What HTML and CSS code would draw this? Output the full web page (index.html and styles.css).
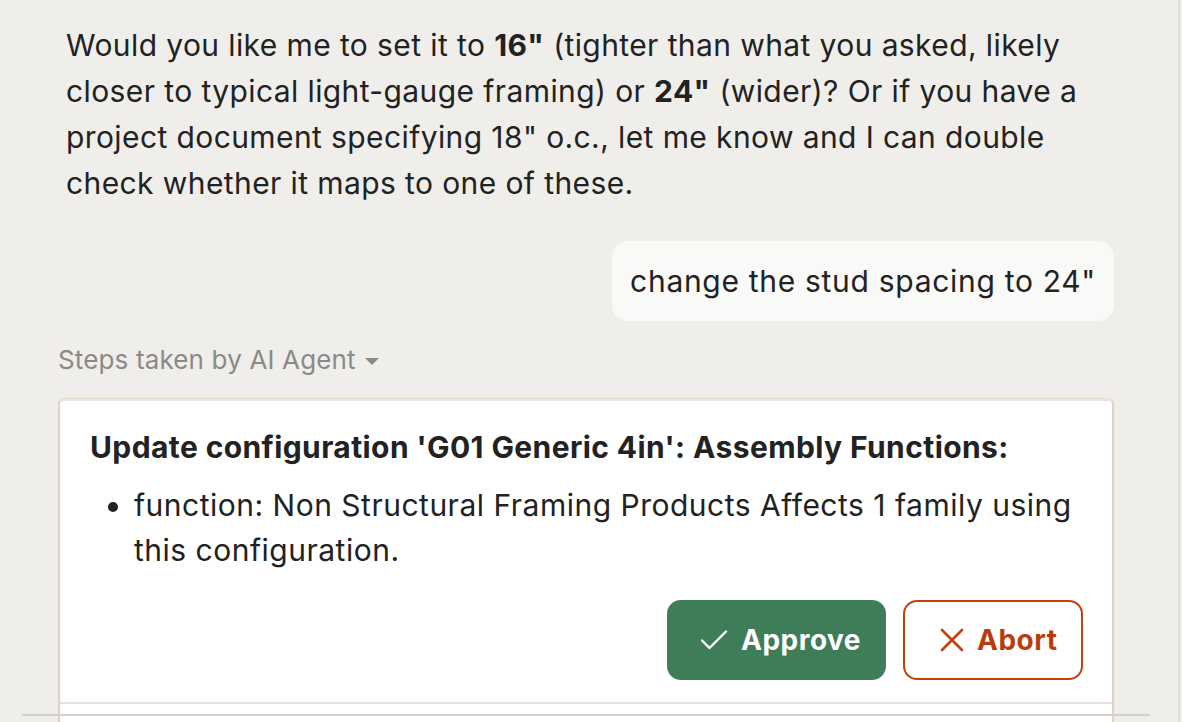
FILE: index.html
```html
<!DOCTYPE html>
<html lang="en">
<head>
<meta charset="utf-8">
<link rel="stylesheet" href="styles.css">
</head>
<body>
<div class="app">
  <div class="chat">
    <p class="assistant">Would you like me to set it to <b>16"</b> (tighter than what you asked, likely closer to typical light-gauge framing) or <b>24"</b> (wider)? Or if you have a project document specifying 18" o.c., let me know and I can double check whether it maps to one of these.</p>
    <div class="user-row">
      <div class="bubble">change the stud spacing to 24"</div>
    </div>
    <div class="steps">Steps taken by AI Agent <span class="caret"></span></div>
    <div class="card">
      <div class="card-body">
        <div class="card-title">Update configuration 'G01 Generic 4in': Assembly Functions:</div>
        <ul class="card-list">
          <li>function: Non Structural Framing Products Affects 1 family using this configuration.</li>
        </ul>
        <div class="actions">
          <button class="btn approve">
            <svg width="28" height="22" viewBox="0 0 28 22"><path d="M2 11.5 L9.5 19 L26 2.5" fill="none" stroke="#fff" stroke-width="2.4" stroke-linecap="round" stroke-linejoin="round"/></svg>
            Approve
          </button>
          <button class="btn abort">
            <svg width="24" height="24" viewBox="0 0 24 24"><path d="M2 2 L22 22 M22 2 L2 22" fill="none" stroke="#c2410c" stroke-width="2.6" stroke-linecap="round"/></svg>
            Abort
          </button>
        </div>
      </div>
      <div class="card-foot"></div>
    </div>
  </div>
  <div class="composer-edge"></div>
</div>
</body>
</html>
```
FILE: styles.css
```css
* { box-sizing: border-box; }
html, body { margin: 0; padding: 0; }
body {
  background: #efeeea;
  font-family: Inter, "Noto Sans", sans-serif;
  color: #222222;
}
.app {
  position: relative;
  width: 1180px;
  height: 722px;
  overflow: hidden;
  border-right: 2px solid #e2e0da;
}
.chat {
  margin-left: 58px;
  width: 1056px;
  padding-top: 22px;
}
.assistant {
  margin: 0;
  padding: 0 8px;
  font-size: 30px;
  letter-spacing: 0.4px;
  line-height: 46px;
  width: 1056px;
}
.assistant b { font-weight: 700; }
.user-row {
  display: flex;
  justify-content: flex-end;
  margin-top: 35px;
}
.bubble {
  background: #f9f9f7;
  border-radius: 16px;
  padding: 22px 18px;
  font-size: 30px;
  letter-spacing: 0.7px;
  line-height: 36px;
}
.steps {
  margin-top: 23px;
  font-size: 26px;
  letter-spacing: 0.15px;
  line-height: 32px;
  color: #8b8a86;
  display: flex;
  align-items: center;
  gap: 9px;
}
.caret {
  display: inline-block;
  width: 0; height: 0;
  border-left: 7px solid transparent;
  border-right: 7px solid transparent;
  border-top: 7px solid #8b8a86;
  margin-top: 2px;
}
.card {
  margin-top: 23px;
  background: #ffffff;
  border-left: 2px solid #ddd5c2;
  border-right: 2px solid #ddd5c2;
  border-top: 2px solid #e6e6e4;
  border-radius: 6px 6px 0 0;
  box-shadow: 0 -1px 0 #e2dcca;
}
.card-body {
  padding: 28px 29px 22px 30px;
}
.card-title {
  font-weight: 700;
  font-size: 30px;
  letter-spacing: 0.4px;
  line-height: 36px;
}
.card-list {
  margin: 18px 0 0;
  padding-left: 44px;
  font-size: 30px;
  letter-spacing: 0.5px;
  line-height: 45px;
}
.actions {
  display: flex;
  justify-content: flex-end;
  gap: 17px;
  margin-top: 27px;
}
.btn {
  height: 80px;
  border-radius: 14px;
  font-family: Inter, "Noto Sans", sans-serif;
  font-size: 28px;
  letter-spacing: 0.5px;
  font-weight: 700;
  display: flex;
  align-items: center;
  gap: 13px;
  cursor: pointer;
}
.approve {
  width: 219px;
  background: #3f7d58;
  color: #ffffff;
  border: none;
  padding: 0 0 0 33px;
}
.abort {
  width: 180px;
  background: #ffffff;
  color: #b83d0c;
  border: 2px solid #c2410c;
  padding: 0 0 0 35px;
}
.card-foot {
  border-top: 2px solid #e3e3e1;
  height: 40px;
}
.composer-edge {
  position: absolute;
  left: 22px;
  top: 714px;
  width: 1128px;
  height: 2px;
  background: #d3d1cc;
}
```
